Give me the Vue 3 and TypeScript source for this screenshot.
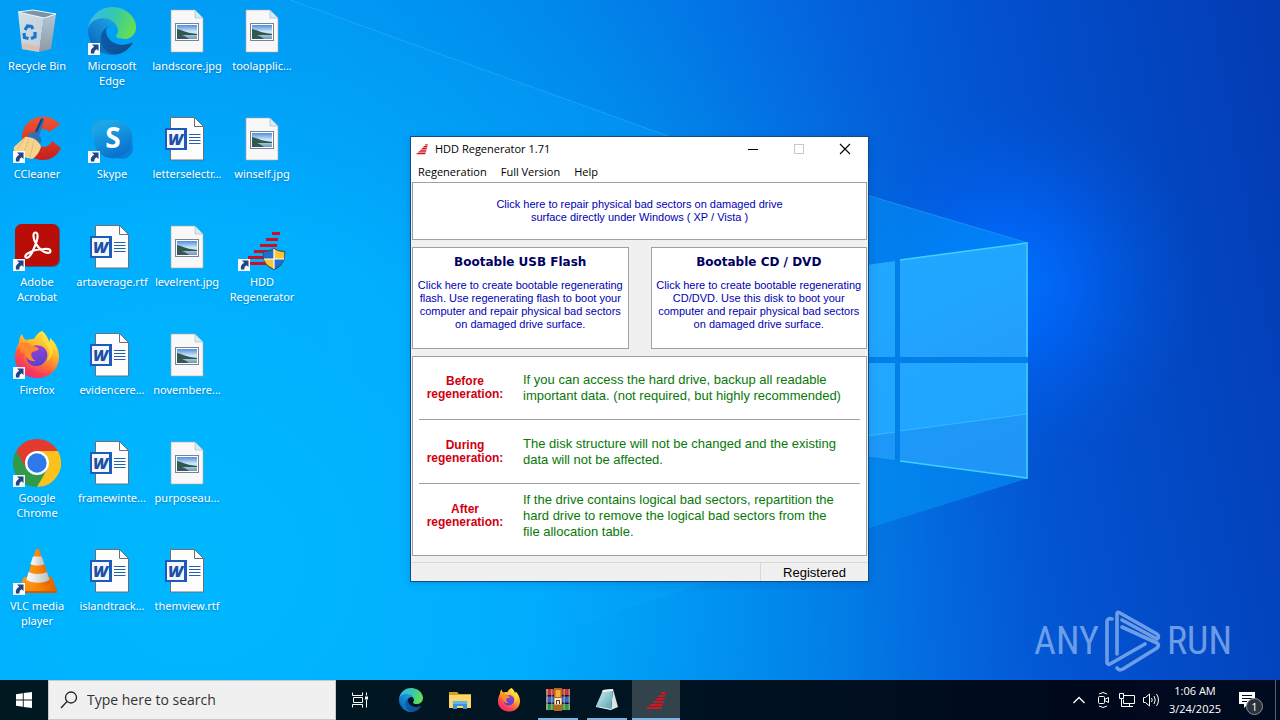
<script setup lang="ts">
import { ref } from 'vue'

interface DesktopItem {
  label: string
  icon: string
  col: number
  row: number
  shortcut?: boolean
}

interface TaskItem {
  label: string
  icon: string
  state: 'pinned' | 'running' | 'active'
}

interface Note {
  when: string
  text: string[]
}

const items: DesktopItem[] = [
  { label: 'Recycle Bin', icon: 'bin', col: 1, row: 1 },
  { label: 'CCleaner', icon: 'ccleaner', col: 1, row: 2, shortcut: true },
  { label: 'Adobe Acrobat', icon: 'acrobat', col: 1, row: 3, shortcut: true },
  { label: 'Firefox', icon: 'firefox', col: 1, row: 4, shortcut: true },
  { label: 'Google Chrome', icon: 'chrome', col: 1, row: 5, shortcut: true },
  { label: 'VLC media player', icon: 'vlc', col: 1, row: 6, shortcut: true },
  { label: 'Microsoft Edge', icon: 'edge', col: 2, row: 1, shortcut: true },
  { label: 'Skype', icon: 'skype', col: 2, row: 2, shortcut: true },
  { label: 'artaverage.rtf', icon: 'word', col: 2, row: 3 },
  { label: 'evidencere...', icon: 'word', col: 2, row: 4 },
  { label: 'framewinte...', icon: 'word', col: 2, row: 5 },
  { label: 'islandtrack...', icon: 'word', col: 2, row: 6 },
  { label: 'landscore.jpg', icon: 'jpg', col: 3, row: 1 },
  { label: 'letterselectr...', icon: 'word', col: 3, row: 2 },
  { label: 'levelrent.jpg', icon: 'jpg', col: 3, row: 3 },
  { label: 'novembere...', icon: 'jpg', col: 3, row: 4 },
  { label: 'purposeau...', icon: 'jpg', col: 3, row: 5 },
  { label: 'themview.rtf', icon: 'word', col: 3, row: 6 },
  { label: 'toolapplic...', icon: 'jpg', col: 4, row: 1 },
  { label: 'winself.jpg', icon: 'jpg', col: 4, row: 2 },
  { label: 'HDD Regenerator', icon: 'hdd', col: 4, row: 3, shortcut: true },
]

const tasks: TaskItem[] = [
  { label: 'Microsoft Edge', icon: 'edge', state: 'pinned' },
  { label: 'File Explorer', icon: 'explorer', state: 'pinned' },
  { label: 'Firefox', icon: 'firefox', state: 'pinned' },
  { label: 'WinRAR', icon: 'winrar', state: 'running' },
  { label: 'Notepad', icon: 'notepad', state: 'running' },
  { label: 'HDD Regenerator', icon: 'bars', state: 'active' },
]

const menus: string[] = ['Regeneration', 'Full Version', 'Help']

const notes: Note[] = [
  {
    when: 'Before',
    text: [
      'If you can access the hard drive, backup all readable',
      'important data. (not required, but highly recommended)',
    ],
  },
  {
    when: 'During',
    text: ['The disk structure will not be changed and the existing', 'data will not be affected.'],
  },
  {
    when: 'After',
    text: [
      'If the drive contains logical bad sectors, repartition the',
      'hard drive to remove the logical bad sectors from the',
      'file allocation table.',
    ],
  },
]

const query = ref<string>('')
</script>

<template>
  <div class="screen">
    <svg class="sprite" aria-hidden="true">
      <defs>
        <linearGradient id="e1" x1="0.2" y1="0.6" x2="1" y2="0.6">
          <stop offset="0" stop-color="#0c59a4" /><stop offset="1" stop-color="#114a8b" />
        </linearGradient>
        <linearGradient id="e2" x1="0.8" y1="0.2" x2="0.2" y2="1">
          <stop offset="0" stop-color="#1b9de2" /><stop offset="0.5" stop-color="#1380cf" /><stop offset="1" stop-color="#0560b5" />
        </linearGradient>
        <linearGradient id="e3" x1="0" y1="0.3" x2="1" y2="0.6">
          <stop offset="0" stop-color="#35b8f1" /><stop offset="0.5" stop-color="#36c9a9" /><stop offset="1" stop-color="#69e04b" />
        </linearGradient>
        <linearGradient id="binL" x1="0" y1="0" x2="1" y2="1">
          <stop offset="0" stop-color="#cfdfe9" /><stop offset="1" stop-color="#c3ccd3" />
        </linearGradient>
        <linearGradient id="binR" x1="0" y1="0" x2="0" y2="1">
          <stop offset="0" stop-color="#b3c6d3" /><stop offset="1" stop-color="#8e9aa5" />
        </linearGradient>
        <linearGradient id="ccr" x1="0" y1="0" x2="0" y2="1">
          <stop offset="0" stop-color="#f05536" /><stop offset="1" stop-color="#c71f1a" />
        </linearGradient>
        <linearGradient id="ffb" x1="0.8" y1="0" x2="0.3" y2="1">
          <stop offset="0" stop-color="#fff04a" /><stop offset="0.35" stop-color="#ffbc2b" />
          <stop offset="0.65" stop-color="#ff6c37" /><stop offset="1" stop-color="#f0198a" />
        </linearGradient>
        <linearGradient id="ffg" x1="0.3" y1="0" x2="0.6" y2="1">
          <stop offset="0" stop-color="#a33fd6" /><stop offset="1" stop-color="#5143cf" />
        </linearGradient>
        <linearGradient id="sky" x1="0" y1="0" x2="0.4" y2="1">
          <stop offset="0" stop-color="#1fb5ee" /><stop offset="1" stop-color="#0a72cf" />
        </linearGradient>
        <linearGradient id="vlo" x1="0" y1="0" x2="1" y2="0">
          <stop offset="0" stop-color="#ff9a1e" /><stop offset="0.5" stop-color="#fb8604" /><stop offset="1" stop-color="#dd5f00" />
        </linearGradient>
        <linearGradient id="vlw" x1="0" y1="0" x2="1" y2="0">
          <stop offset="0" stop-color="#ffffff" /><stop offset="1" stop-color="#b9bdc0" />
        </linearGradient>
        <linearGradient id="photo" x1="0" y1="0" x2="0" y2="1">
          <stop offset="0" stop-color="#4f8fe0" /><stop offset="0.5" stop-color="#d6e9f7" /><stop offset="1" stop-color="#6c97bb" />
        </linearGradient>
        <linearGradient id="pad" x1="0" y1="0" x2="1" y2="1">
          <stop offset="0" stop-color="#d9f2f5" /><stop offset="1" stop-color="#4c9fae" />
        </linearGradient>
      </defs>

      <symbol id="i-bin" viewBox="0 0 48 48">
        <path d="M5 5 20 3 43 7 31 11z" fill="#7d93a3" />
        <path d="M5 5 31 11 26 45 9 42z" fill="url(#binL)" />
        <path d="M31 11 43 7 38 42 26 45z" fill="url(#binR)" />
        <path d="M9 36 27 39 26 45 9 42z" fill="#e0b9a9" opacity="0.7" />
        <path d="M5 5 20 3 43 7 31 11z" fill="none" stroke="#eef8ff" stroke-width="1" />
        <g fill="none" stroke="#1577d0" stroke-width="3.200">
          <path d="M12 23 14.500 19 18.500 19.500 20 22" />
          <path d="M22 25 22 30 18 31.500" />
          <path d="M15.500 31.500 11.500 30.500 11 26" />
        </g>
      </symbol>

      <symbol id="i-edge" viewBox="0 0 256 256">
        <path fill="url(#e1)" d="M231.1 190.5c-3.4 1.8-6.9 3.4-10.5 4.7a101.9 101.9 0 0 1-35.9 6.5c-47.3 0-88.5-32.5-88.5-74.3.1-11.4 6.4-21.9 16.4-27.3-42.8 1.8-53.8 46.4-53.8 72.5 0 73.9 68.1 81.4 82.8 81.4 7.9 0 19.8-2.3 27-4.6l1.3-.4a128.3 128.3 0 0 0 66.6-52.8 4 4 0 0 0-5.4-5.7z" />
        <path fill="url(#e2)" d="M105.7 241.4a79.2 79.2 0 0 1-22.7-21.3A80.7 80.7 0 0 1 112.6 100.1c3.1-1.5 8.5-4.1 15.6-4a32.4 32.4 0 0 1 25.7 13 31.9 31.9 0 0 1 6.3 18.7c0-.2 24.5-79.6-80-79.6-43.9 0-80 41.7-80 78.2a130.1 130.1 0 0 0 12.1 56 128 128 0 0 0 156.4 67 75.5 75.5 0 0 1-62.8-8z" />
        <path fill="url(#e3)" d="M152.3 148.9c-.8 1-3.3 2.5-3.3 5.7 0 2.6 1.7 5.1 4.7 7.2 14.4 10 41.5 8.7 41.6 8.7a59.6 59.6 0 0 0 30.3-8.3 61.4 61.4 0 0 0 30.4-52.9c.3-22.4-8-37.3-11.3-43.9C223.5 23.9 177.7.1 128 .1a128 128 0 0 0-128 126.2c.5-36.5 36.8-66 80-66 3.5 0 23.5.3 42 10.1 16.3 8.6 24.9 18.9 30.8 29.2 6.2 10.7 7.3 24.1 7.3 29.5s-2.7 13.3-7.8 19.8z" />
      </symbol>

      <symbol id="i-ccleaner" viewBox="0 0 48 48">
        <path d="M47 10A20.500 20.500 0 0 0 30 1.500C17 2 9 11 9 23c0 13 9 22 21 22 8 0 14-4 18-12l-9-7c-2 4-5 6-9 6-5 0-8-4-8-9 0-6 3-9 8-9 3 0 5 1 6 3z" fill="url(#ccr)" />
        <path d="M12 22c8-1 14 4 16 10-2 6-5 10-9 12L6 41c-4-2-6-6-5-9z" fill="#f6d48c" />
        <path d="M12 23 4 34M16 24 10 40M21 26 17 42" stroke="#e6bb74" stroke-width="1" fill="none" />
        <path d="M14 22c1-3 4-5 7-4l7-14c1-2 4-1 3 2l-5 15c3 2 3 5 1 8-3-4-7-7-13-7z" fill="#2e70b6" />
        <path d="M23 17 29 4" stroke="#173f78" stroke-width="2" fill="none" />
      </symbol>

      <symbol id="i-acrobat" viewBox="0 0 48 48">
        <rect x="2" y="1" width="45" height="43" rx="7" fill="#7e0d0a" opacity="0.5" />
        <rect x="2" y="1" width="44" height="42" rx="7" fill="#b90d07" />
        <path d="M22.500 9.500c-2.500 0-2.500 4-1 8 2 5 6 9.500 10 11.500 3 1.500 6 1 6-1s-3-2.500-7-2c-6 .5-12 2-15 4-3 1.500-4 3.500-2.500 4.500s4-1 6-5c2.500-5 5-11 5.500-15 .3-3-.3-5-2-5z" fill="none" stroke="#fff" stroke-width="2.200" />
      </symbol>

      <symbol id="i-firefox" viewBox="0 0 48 48">
        <path d="M29 0c4 3 6 7 7 11 1-1 1-2 1-4 6 5 9 12 9 19 0 12-9 21-21 21C11 47 2 38 2 26c0-6 2-11 4-14 0-4 1-7 3-9 1 3 2 5 4 6 3-1 6-1 8-1 2-4 5-7 8-8z" fill="url(#ffb)" />
        <path d="M15 20c2-5 8-7 13-5 6 2 8 9 5 14-3 6-11 8-16 4-4-3-5-9-2-13z" fill="url(#ffg)" />
        <path d="M6 13c5-3 10-2 13 2 3 0 5 1 7 3-2 2-5 2-7 3-2 3 0 7 4 9-6 1-11-3-11-9 0-4-3-6-6-8z" fill="#ff8a2a" />
        <path d="M2 26c0 12 9 21 22 21 6 0 12-3 16-7-9 4-19 2-25-4-4-4-5-9-4-14-3 1-4-2-5-6-2 2-4 6-4 10z" fill="#f8384d" opacity="0.450" />
        <path d="M29 0c-2 5 0 9 4 13 4 5 4 11 1 17 6-4 7-10 5-16 3 3 4 7 4 12 1-8-1-14-6-19 0 2 0 3-1 4-1-4-3-8-7-11z" fill="#ffe23e" opacity="0.700" />
      </symbol>

      <symbol id="i-chrome" viewBox="0 0 48 48">
        <path d="M13.600 30 3.200 12A24 24 0 0 0 24 48L34.400 30z" fill="#2f9a48" />
        <path d="M34.400 30 24 48A24 24 0 0 0 44.800 12H24z" fill="#fbc21c" />
        <path d="M24 12H44.800A24 24 0 0 0 3.200 12L13.600 30z" fill="#e33b2e" />
        <circle cx="24" cy="24" r="12" fill="#fff" />
        <circle cx="24" cy="24" r="9.700" fill="#2f78ea" />
      </symbol>

      <symbol id="i-vlc" viewBox="0 0 48 48">
        <path d="M11 30H39L44 44V46H5V44z" fill="url(#vlo)" />
        <path d="M6 44H44V46H5z" fill="#d45a00" />
        <path d="M23 2h3L37 34c0 4-6 6-12 6s-12-2-12-6z" fill="url(#vlo)" />
        <path d="M20 9.500h8.500L31.500 17c-4 2-10 2-14 0z" fill="url(#vlw)" />
        <path d="M15.500 25c5 2.500 13 2.500 18.500 0l2.500 8c-6 3.500-17 3.500-23 0z" fill="url(#vlw)" />
      </symbol>

      <symbol id="i-skype" viewBox="0 0 48 48">
        <circle cx="15" cy="16" r="12" fill="#1ea3e6" />
        <circle cx="34" cy="33" r="11" fill="#0b80d6" />
        <circle cx="25" cy="24" r="19.500" fill="url(#sky)" />
      </symbol>

      <symbol id="i-jpg" viewBox="0 0 48 48">
        <path d="M8 3h24l8 8v34H8z" fill="#f8f8f9" stroke="#b9a99f" stroke-width="0.600" />
        <path d="M32 3v8h8z" fill="#d5edf7" stroke="#a0b6c2" stroke-width="0.600" />
        <rect x="12.500" y="16.500" width="23" height="17" fill="#fff" stroke="#77838d" />
        <rect x="14" y="18" width="20" height="14" fill="url(#photo)" />
        <path d="M14 22c5 1 9 4 20 5v1H14z" fill="#2e5a49" />
        <path d="M14 28c5-1 8 1 12 4H14z" fill="#38545c" />
      </symbol>

      <symbol id="i-word" viewBox="0 0 48 48">
        <path d="M7.500 2.500h24l9 9v33.500h-33z" fill="#fdfdfe" stroke="#6b7076" />
        <path d="M31.500 2.500v9h9z" fill="#fff" stroke="#6b7076" />
        <path d="M26 19.500h11.500M26 22.500h11.500M26 25.500h11.500M26 28.500h11.500" stroke="#2560ae" stroke-width="1" />
        <rect x="2" y="13" width="22" height="22" fill="#1d5bbb" />
        <rect x="4" y="15" width="17" height="18" fill="#f4f7fc" />
      </symbol>

      <symbol id="i-hdd" viewBox="0 0 48 48">
        <path d="M34 9h8v3h-8zM28 15h12v3H28zM22 21h17v3H22zM16 27h16v3H16zM10 33h20v3H10zM12 39h18v3H12z" fill="#cc1022" />
        <path d="M25 28c4 0 8-1 11-3 3 2 7 3 11 3 1 9-2 15-11 19-9-4-12-10-11-19z" fill="#444b52" />
        <path d="M26 29c4 0 7-1 10-3v10H26c-.4-2-.3-4 0-7z" fill="#1d6fd0" />
        <path d="M36 26c3 2 6 3 10 3 .3 3 .3 5 0 7H36z" fill="#fbc534" />
        <path d="M26 36h10v10c-6-3-9-6-10-10z" fill="#fbc534" />
        <path d="M36 36h10c-1 4-4 7-10 10z" fill="#1d6fd0" />
        <path d="M36 26v20M26 36h20" stroke="#fff" stroke-width="1.200" />
      </symbol>

      <symbol id="i-bars" viewBox="0 0 24 24">
        <path d="M18 4h4l-.5 2h-5zM15.500 7h6l-.5 2h-7.500zM13 10h7.500l-.5 2h-8.500zM10 13h10l-.5 2H8.500zM7 16h12l-.5 2H5zM4 19h14l-.5 2H2z" fill="#d3151d" />
      </symbol>

      <symbol id="i-explorer" viewBox="0 0 24 24">
        <path d="M1 4h8l2 2h12v4H1z" fill="#d9a028" />
        <path d="M1 7h22v13H1z" fill="#fbd669" />
        <path d="M5 13h14v8h-4v-3H9v3H5z" fill="#3b93dc" />
        <path d="M5 13h14v3H5z" fill="#63b4ec" />
      </symbol>

      <symbol id="i-winrar" viewBox="0 0 24 24">
        <path d="M0 1h24v6H0z" fill="#c2353c" />
        <path d="M0 8.500h24v6H0z" fill="#3867c8" />
        <path d="M0 16h24v6H0z" fill="#34964a" />
        <path d="M0 1h2v21H0zM5 1h1.500v21H5zM17.500 1H19v21h-1.500zM22.500 1H24v21h-1.500z" fill="#e3b8a0" opacity="0.550" />
        <path d="M8 0h8v23H8z" fill="#b4671d" />
        <path d="M9.500 2h5v7h-5z" fill="#f3b13a" />
        <path d="M8.500 10h7v6.500h-7z" fill="#f6ecd8" />
        <path d="M10.500 16v-3.500h3V16" fill="none" stroke="#4b2b12" />
      </symbol>

      <symbol id="i-notepad" viewBox="0 0 24 24">
        <path d="M18 1 23 19 16 22z" fill="#dfe3e4" />
        <path d="M8 2 18 1 16 22 1 18z" fill="url(#pad)" />
        <path d="M8 2 18 1V3L7 4z" fill="#eef5f6" />
        <path d="M1 18 16 21V22L1 19z" fill="#f2f8f8" />
      </symbol>

      <symbol id="i-arrow" viewBox="0 0 12 12">
        <rect width="12" height="12" fill="#f7f9fb" />
        <path d="M4 1.500h6.500v6.500L8.700 6.200C7 7 6.300 8.300 6.300 10.500H3C2.300 7.500 3.500 5 6.200 3.800z" fill="#1f4584" />
      </symbol>
    </svg>

    <main class="desktop">
      <svg class="wallpaper" viewBox="0 0 1280 720" preserveAspectRatio="xMidYMid slice" aria-hidden="true">
        <defs>
          <linearGradient id="base" x1="0" y1="0.1" x2="1" y2="0">
            <stop offset="0" stop-color="#00a8ff" /><stop offset="0.25" stop-color="#009efa" />
            <stop offset="0.45" stop-color="#0284ee" /><stop offset="0.6" stop-color="#046ae2" />
            <stop offset="0.78" stop-color="#0350ce" /><stop offset="1" stop-color="#033bb2" />
          </linearGradient>
          <radialGradient id="low" gradientUnits="userSpaceOnUse" cx="200" cy="560" r="840">
            <stop offset="0" stop-color="#00b8ff" /><stop offset="0.4" stop-color="#00b0ff" stop-opacity="0.9" />
            <stop offset="0.75" stop-color="#0090ea" stop-opacity="0.5" /><stop offset="1" stop-color="#0070dc" stop-opacity="0" />
          </radialGradient>
          <radialGradient id="glow" gradientUnits="userSpaceOnUse" cx="1010" cy="285" r="190">
            <stop offset="0" stop-color="#0070ff" /><stop offset="0.35" stop-color="#0068fc" stop-opacity="0.7" />
            <stop offset="1" stop-color="#0056dc" stop-opacity="0" />
          </radialGradient>
          <linearGradient id="beam" gradientUnits="userSpaceOnUse" x1="290" y1="0" x2="1028" y2="0">
            <stop offset="0" stop-color="#0ab0ff" stop-opacity="0.06" /><stop offset="1" stop-color="#0098fa" stop-opacity="0.55" />
          </linearGradient>
          <linearGradient id="pane" x1="0" y1="0" x2="1" y2="1">
            <stop offset="0" stop-color="#22a8ff" /><stop offset="0.6" stop-color="#20a6ff" /><stop offset="1" stop-color="#249cfc" />
          </linearGradient>
        </defs>
        <rect width="1280" height="720" fill="url(#base)" />
        <rect width="1280" height="720" fill="url(#low)" />
        <rect width="1280" height="720" fill="url(#glow)" />
        <path d="M290 0 668 136 1028 243V478L868 528 300 720H0V0z" fill="url(#beam)" />
        <path d="M290 0 668 136 1028 243" fill="none" stroke="#4cc2ff" stroke-opacity="0.350" />
        <path d="M1028 478 868 528 400 680" fill="none" stroke="#33a8f5" stroke-opacity="0.150" />
        <path d="M780 277 1028 243V478L780 446z" fill="#037fe8" />
        <path d="M780 277 895 261V357H780zM900 260 1027 243V357H900z" fill="url(#pane)" />
        <path d="M780 363H895V460L780 446zM900 363H1027V478L900 461z" fill="url(#pane)" />
        <path d="M780 448 895 432V460L780 446zM900 431 1027 414V478L900 461z" fill="#1e8ff4" opacity="0.600" />
        <path d="M780 448 895 432M900 431 1027 414" stroke="#3fc4ff" stroke-opacity="0.700" />
        <path d="M900 260 1027 243V357M1027 363V478L900 461" fill="none" stroke="#3fd0ff" stroke-width="1.600" />
      </svg>

      <div class="icons">
        <button
          v-for="item in items"
          :key="item.label"
          type="button"
          class="item"
          :style="{ gridColumn: item.col, gridRow: item.row }"
        >
          <svg class="item-icon" viewBox="0 0 48 48" aria-hidden="true">
            <use :href="'#i-' + item.icon" width="48" height="48" />
            <text v-if="item.icon === 'word'" class="mark-w" x="12.500" y="30" text-anchor="middle">W</text>
            <text v-if="item.icon === 'skype'" class="mark-s" x="25" y="33" text-anchor="middle">S</text>
            <use v-if="item.shortcut" href="#i-arrow" x="0" y="36" width="12" height="12" />
          </svg>
          <span class="item-label">{{ item.label }}</span>
        </button>
      </div>

      <div class="watermark">
        <span>ANY</span>
        <svg viewBox="0 0 56 62" width="56" height="62" aria-hidden="true">
          <g fill="none" stroke="currentColor" stroke-width="3.600" stroke-linejoin="round" stroke-linecap="round">
            <path d="M7 9C4 8 2 9 2 12V53Q3 55 5 54L40 34" />
            <path d="M12 44V4Q12 1 15 3L52 24Q55 27 52 29L17 10" />
            <path d="M17 17 52 33Q55 35 52 38L18 59Q14 61 12 58" />
          </g>
        </svg>
        <span>RUN</span>
      </div>

      <section class="window" aria-label="HDD Regenerator 1.71">
        <header class="titlebar">
          <svg class="app-icon" viewBox="0 0 24 24" aria-hidden="true"><use href="#i-bars" width="24" height="24" /></svg>
          <h1>HDD Regenerator 1.71</h1>
          <button type="button" class="caption" aria-label="Minimize">
            <svg viewBox="0 0 12 12"><path d="M1 6.500h10" stroke="#000" /></svg>
          </button>
          <button type="button" class="caption" aria-label="Maximize" disabled>
            <svg viewBox="0 0 12 12"><rect x="1.500" y="1.500" width="9" height="9" fill="none" stroke="#c8c8c8" /></svg>
          </button>
          <button type="button" class="caption" aria-label="Close">
            <svg viewBox="0 0 12 12"><path d="M1 1l10 10M11 1 1 11" stroke="#000" stroke-width="1.100" /></svg>
          </button>
        </header>
        <nav class="menubar">
          <button v-for="m in menus" :key="m" type="button">{{ m }}</button>
        </nav>
        <div class="body">
          <button type="button" class="panel repair">
            Click here to repair physical bad sectors on damaged drive<br />
            surface directly under Windows ( XP / Vista )
          </button>
          <div class="pair">
            <button type="button" class="panel boot">
              <strong>Bootable USB Flash</strong>
              <span>Click here to create bootable regenerating<br />flash. Use regenerating flash to boot your<br />computer and repair physical bad sectors<br />on damaged drive surface.</span>
            </button>
            <button type="button" class="panel boot">
              <strong>Bootable CD / DVD</strong>
              <span>Click here to create bootable regenerating<br />CD/DVD. Use this disk to boot your<br />computer and repair physical bad sectors<br />on damaged drive surface.</span>
            </button>
          </div>
          <dl class="panel notes">
            <div v-for="n in notes" :key="n.when" class="note">
              <dt>{{ n.when }}<br />regeneration:</dt>
              <dd><template v-for="(line, i) in n.text" :key="line"><br v-if="i > 0" />{{ line }}</template></dd>
            </div>
          </dl>
        </div>
        <footer class="status"><span class="registered">Registered</span></footer>
      </section>
    </main>

    <footer class="taskbar">
      <button type="button" class="tb-btn" aria-label="Start">
        <svg width="16" height="16" viewBox="0 0 16 16"><path d="M0 2.200 6.800 1.200V7.500H0zM7.700 1.100 16 0V7.500H7.700zM0 8.400H6.800V14.800L0 13.800zM7.700 8.400H16V16L7.700 14.900z" fill="#fff" /></svg>
      </button>
      <label class="search">
        <svg width="18" height="18" viewBox="0 0 18 18" aria-hidden="true"><circle cx="11" cy="6.500" r="5.500" fill="none" stroke="#222" stroke-width="1.300" /><path d="M7 10.500 1 17" stroke="#222" stroke-width="1.300" /></svg>
        <input v-model="query" type="text" placeholder="Type here to search" aria-label="Type here to search" />
      </label>
      <button type="button" class="tb-btn" aria-label="Task View">
        <svg width="16" height="16" viewBox="0 0 16 16"><g fill="none" stroke="#fff"><path d="M.5.5V3.500H10.500V.5M.5 15.500V12.500H10.500V15.500M1.500 5.500H10.500V10.500H1.500zM14.500.5V3.500M14.500 8V15.500" /></g><rect x="13" y="4.500" width="3" height="3" fill="#fff" /></svg>
      </button>
      <div class="apps">
        <button v-for="t in tasks" :key="t.label" type="button" class="tb-btn" :class="t.state" :aria-label="t.label">
          <svg width="24" height="24" viewBox="0 0 24 24" aria-hidden="true"><use :href="'#i-' + t.icon" width="24" height="24" /></svg>
        </button>
      </div>
      <div class="tray">
        <button type="button" aria-label="Show hidden icons">
          <svg width="18" height="18" viewBox="0 0 18 18"><path d="M3.500 12 9 6.500l5.500 5.500" fill="none" stroke="#fff" stroke-width="1.300" /></svg>
        </button>
        <button type="button" aria-label="Meet Now">
          <svg width="18" height="18" viewBox="0 0 18 18"><g fill="none" stroke="#fff"><rect x="4.500" y="5.500" width="6" height="7" rx="1" /><path d="M10.500 8.500 14.500 6.500V11.500L10.500 9.500M5 3Q9 0 13 3M5 15Q9 18 13 15" /></g></svg>
        </button>
        <button type="button" aria-label="Network">
          <svg width="18" height="18" viewBox="0 0 18 18"><g fill="none" stroke="#fff"><path d="M6 4.500H16.500V12.500H5.500V8.500M11.500 12.500V15M7 15.500H15M1.500 2.500H5.500V7.500H1.500zM3.500 7.500V15.500H7" /></g></svg>
        </button>
        <button type="button" aria-label="Volume">
          <svg width="18" height="18" viewBox="0 0 18 18"><g fill="none" stroke="#fff"><path d="M1.500 6.500H3.500L7.500 3V15L3.500 11.500H1.500zM9.500 7Q11 9 9.500 11M12 5Q14.500 9 12 13M14.500 3Q18.500 9 14.500 15" /></g></svg>
        </button>
      </div>
      <time class="clock" datetime="2025-03-24T01:06">1:06 AM<br />3/24/2025</time>
      <button type="button" class="tb-btn notify" aria-label="Notifications">
        <svg width="16" height="16" viewBox="0 0 16 16"><path d="M0 0h16v12H9l-4 4v-4H0z" fill="#fff" /><path d="M3 3.500h10M3 6.500h10M3 9.500h5" stroke="#000a1c" /></svg>
        <span class="badge">1</span>
      </button>
      <button type="button" class="show-desktop" aria-label="Show desktop"></button>
    </footer>
  </div>
</template>

<style>
html,
body {
  margin: 0;
}
</style>

<style scoped>
.screen {
  display: flex;
  flex-direction: column;
  min-height: 100vh;
  overflow: hidden;
  position: relative;
  background: #0090f0;
  font-family: 'Open Sans', 'Noto Sans', sans-serif;
}
.sprite {
  position: absolute;
  width: 0;
  height: 0;
}
button {
  margin: 0;
  padding: 0;
  border: 0;
  background: none;
  font: inherit;
  color: inherit;
}
.desktop {
  flex: 1;
  min-height: 680px;
  box-sizing: border-box;
}
.wallpaper {
  position: absolute;
  inset: 0;
  width: 100%;
  height: 100%;
}
.icons {
  position: relative;
  display: grid;
  grid-template-columns: repeat(4, 75px);
  grid-template-rows: repeat(6, 108px);
  width: max-content;
}
.item {
  display: flex;
  flex-direction: column;
  align-items: center;
  gap: 3px;
  padding: 7px 1px 0 0;
}
.item-icon {
  width: 48px;
  height: 48px;
}
.mark-w {
  font-family: 'Open Sans', sans-serif;
  font-size: 16px;
  font-style: italic;
  font-weight: 800;
  fill: #1d4fa8;
}
.mark-s {
  font-family: 'Open Sans', sans-serif;
  font-size: 28px;
  font-weight: 700;
  fill: #fff;
}
.item-label {
  max-width: 75px;
  font-family: 'Noto Sans', sans-serif;
  font-size: 11px;
  line-height: 15px;
  text-align: center;
  color: #fff;
  text-shadow: 0 1px 2px rgba(0, 40, 90, 0.4);
}
.watermark {
  position: absolute;
  right: 48px;
  bottom: 48px;
  display: flex;
  align-items: center;
  gap: 6px;
  font-family: 'Liberation Sans Narrow', 'Roboto Condensed', 'DejaVu Sans Condensed', sans-serif;
  font-size: 38px;
  line-height: 1;
  color: rgba(150, 188, 242, 0.72);
}
.window {
  position: absolute;
  left: 410px;
  top: 136px;
  box-sizing: border-box;
  width: 459px;
  border: 1px solid #144a84;
  background: #f0f0f0;
  color: #000;
  box-shadow: 0 2px 8px rgba(0, 20, 80, 0.15);
}
.titlebar {
  display: flex;
  align-items: center;
  height: 24px;
  background: #fff;
}
.app-icon {
  width: 14px;
  height: 14px;
  margin: 0 6px 0 4px;
}
.titlebar h1 {
  flex: 1;
  margin: 0;
  font-size: 11px;
  line-height: 16px;
  font-weight: 400;
}
.caption {
  display: grid;
  place-items: center;
  width: 46px;
  height: 24px;
}
.caption svg {
  width: 12px;
  height: 12px;
}
.menubar {
  display: flex;
  gap: 14px;
  height: 21px;
  padding-left: 7px;
  background: #fff;
  font-size: 11px;
  line-height: 21px;
}
.body {
  display: flex;
  flex-direction: column;
  gap: 7px;
  padding: 0 1px;
  font-family: 'Liberation Sans', Arial, sans-serif;
}
.panel {
  box-sizing: border-box;
  border: 1px solid #a0a0a0;
  background: #fff;
}
.repair {
  height: 58px;
  font-size: 11px;
  line-height: 13px;
  color: #0000b4;
}
.pair {
  display: grid;
  grid-template-columns: 1fr 1fr;
  gap: 22px;
}
.boot {
  display: flex;
  flex-direction: column;
  align-items: center;
  gap: 9px;
  height: 102px;
  padding-top: 6px;
  font-size: 11px;
  line-height: 13px;
  color: #0000b4;
  white-space: nowrap;
}
.boot strong {
  font-family: 'DejaVu Sans', Verdana, sans-serif;
  font-size: 12px;
  line-height: 16px;
  color: #000060;
}
.notes {
  margin: 0;
  padding: 0 6px;
}
.note {
  display: grid;
  grid-template-columns: 92px 1fr;
  column-gap: 12px;
  align-items: center;
  height: 64px;
  box-sizing: border-box;
}
.note:first-child {
  height: 63px;
}
.note:not(:last-child) {
  border-bottom: 1px solid #a0a0a0;
}
.note:last-child {
  height: 71px;
  padding-bottom: 8px;
}
.note dt {
  font-size: 12px;
  line-height: 13px;
  font-weight: 700;
  text-align: center;
  color: #d00010;
}
.note dd {
  margin: 0;
  font-size: 13px;
  line-height: 16px;
  color: #087808;
  white-space: nowrap;
}
.status {
  display: flex;
  justify-content: flex-end;
  height: 18px;
  margin-top: 6px;
  border-top: 1px solid #d8d8d8;
  font-family: 'Liberation Sans', Arial, sans-serif;
  font-size: 13px;
  line-height: 20px;
}
.registered {
  width: 107px;
  border-left: 1px solid #d8d8d8;
  text-align: center;
}
.taskbar {
  position: relative;
  display: flex;
  height: 40px;
  background: linear-gradient(90deg, #001820 0%, #001422 50%, #00091c 85%, #000a20 100%);
  color: #fff;
}
.tb-btn {
  position: relative;
  display: grid;
  place-items: center;
  width: 48px;
  height: 40px;
}
.search {
  box-sizing: border-box;
  display: flex;
  align-items: center;
  gap: 9px;
  width: 288px;
  padding: 0 11px;
  border: 1px solid #c8c8c8;
  background: #f0f0f0;
}
.search input {
  flex: 1;
  min-width: 0;
  padding: 0;
  border: 0;
  outline: 0;
  background: none;
  font-family: 'Open Sans', sans-serif;
  font-size: 14px;
  line-height: 20px;
  color: #222;
}
.search input::placeholder {
  color: #333;
  opacity: 1;
}
.apps {
  display: flex;
  gap: 1px;
  margin-left: 3px;
}
.active {
  background: #32434c;
}
.running::after,
.active::after {
  content: '';
  position: absolute;
  left: 4px;
  right: 4px;
  bottom: 0;
  height: 2px;
  background: #78b4e4;
}
.active::after {
  left: 0;
  right: 0;
}
.tray {
  display: flex;
  margin-left: auto;
}
.tray button {
  display: grid;
  place-items: center;
  width: 24px;
  height: 40px;
}
.clock {
  box-sizing: border-box;
  width: 60px;
  padding: 2px 0 0 4px;
  font-size: 11px;
  line-height: 18px;
  text-align: center;
}
.notify {
  width: 48px;
  margin-right: 4px;
}
.badge {
  position: absolute;
  left: 23px;
  top: 18px;
  box-sizing: border-box;
  width: 17px;
  height: 17px;
  border: 1px solid #8c929a;
  border-radius: 50%;
  background: #2c323c;
  font-size: 11px;
  line-height: 15px;
  text-align: center;
}
.show-desktop {
  width: 5px;
  border-left: 1px solid #5a6270;
}
</style>
